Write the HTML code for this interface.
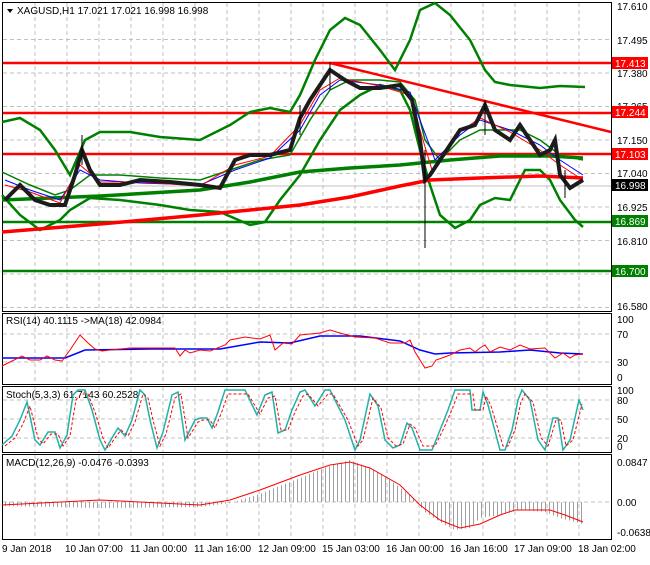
<!DOCTYPE html><html><head><style>
body{margin:0;background:#fff;width:650px;height:560px;overflow:hidden;font-family:"Liberation Sans",sans-serif}
svg text{font-family:"Liberation Sans",sans-serif;font-size:10px;fill:#000}
</style></head><body>
<svg width="650" height="560" viewBox="0 0 650 560" xmlns="http://www.w3.org/2000/svg">
<defs>
<pattern id="hist" width="4" height="10" patternUnits="userSpaceOnUse"><rect x="1" width="1" height="10" fill="#a0a0a0"/></pattern>
</defs>
<rect width="650" height="560" fill="#fff"/>
<g stroke="#c0c0c0" stroke-dasharray="4,3" stroke-width="1">
<path d="M35 3V311M67 3V311M99 3V311M131 3V311M163 3V311M195 3V311M227 3V311M259 3V311M291 3V311M323 3V311M355 3V311M387 3V311M419 3V311M451 3V311M483 3V311M515 3V311M547 3V311M579 3V311"/>
<path d="M35 314V384M67 314V384M99 314V384M131 314V384M163 314V384M195 314V384M227 314V384M259 314V384M291 314V384M323 314V384M355 314V384M387 314V384M419 314V384M451 314V384M483 314V384M515 314V384M547 314V384M579 314V384"/>
<path d="M35 387V452M67 387V452M99 387V452M131 387V452M163 387V452M195 387V452M227 387V452M259 387V452M291 387V452M323 387V452M355 387V452M387 387V452M419 387V452M451 387V452M483 387V452M515 387V452M547 387V452M579 387V452"/>
<path d="M35 455V538M67 455V538M99 455V538M131 455V538M163 455V538M195 455V538M227 455V538M259 455V538M291 455V538M323 455V538M355 455V538M387 455V538M419 455V538M451 455V538M483 455V538M515 455V538M547 455V538M579 455V538"/>
<path d="M3 39.5H611M3 73H611M3 106.5H611M3 140H611M3 173.5H611M3 207H611M3 240.5H611M3 274H611M3 307.5H611"/>
<path d="M3 334H611M3 362H611M3 400H611M3 419H611M3 438H611M3 502H611"/>
</g>
<g stroke="#000" fill="none" stroke-width="1">
<rect x="2.5" y="2.5" width="609" height="309"/>
<rect x="2.5" y="313.5" width="609" height="71"/>
<rect x="2.5" y="386.5" width="609" height="66"/>
<rect x="2.5" y="454.5" width="609" height="85"/>
</g>
<g stroke-width="2.5">
<path d="M3 63H611M3 113H611M3 154H611" stroke="#f00"/>
<path d="M3 222H611M3 271H611" stroke="#008000"/>
</g>
<path d="M3 186H611" stroke="#c0c0c0"/>
<g fill="none" stroke="#008000" stroke-width="2.5">
<path d="M2 122L20 118L40 130L55 150L70 175L85 140L100 132L130 132L160 137L200 140L230 125L250 112L270 108L290 112L300 95L315 60L330 30L345 18L360 25L380 50L395 70L410 40L420 10L435 3L450 15L470 40L485 70L495 82L510 85L540 88L560 86L585 87"/>
<path d="M2 195L20 215L40 230L60 220L70 210L90 198L120 200L160 205L190 210L220 212L250 225L265 222L280 200L300 175L320 140L340 110L360 95L380 85L400 90L410 110L420 150L430 185L440 215L455 228L470 220L480 205L495 198L510 200L525 170L540 170L550 180L560 200L575 220L583 227"/>
<path d="M2 200L100 196L200 190L250 182L300 172L350 168L400 165L450 160L500 156L550 156L583 158" stroke-width="3.5"/>
</g>
<path d="M2 172L30 185L55 195L70 190L90 175L120 175L160 178L200 180L230 170L260 160L290 155L310 120L330 90L350 80L380 80L400 82L415 100L425 140L440 160L460 140L480 130L500 130L520 130L540 140L560 155L583 160" fill="none" stroke="#008000" stroke-width="1.5"/>
<path d="M2 232L100 224L200 215L300 205L350 197L400 186L430 180L480 178L540 176L583 178" fill="none" stroke="#f00" stroke-width="3.5"/>
<path d="M330 63L611 132" stroke="#f00" stroke-width="2.5"/>
<path d="M5 180L30 190L60 200L80 170L100 180L140 183L200 185L235 170L270 158L300 130L320 95L340 80L380 85L410 92L420 120L435 160L460 135L480 120L510 130L540 145L560 160L583 175" fill="none" stroke="#00f" stroke-width="1"/>
<path d="M5 185L30 192L60 203L80 165L100 182L140 182L200 186L235 165L270 156L300 125L320 90L340 78L380 86L410 95L420 130L432 170L460 132L480 118L510 132L540 150L560 165L583 180" fill="none" stroke="#f00" stroke-width="1"/>
<path d="M5 200L20 185L35 200L50 205L65 205L75 175L82 150L90 170L100 185L120 185L140 180L170 182L200 185L220 188L235 160L250 155L270 155L290 150L300 118L310 100L320 85L330 70L345 80L360 88L380 88L400 85L412 100L420 140L425 180L430 175L440 160L450 145L460 130L475 125L485 105L495 130L510 140L520 125L530 140L540 155L550 150L555 140L560 175L570 188L583 180" fill="none" stroke="#1c1c1c" stroke-width="4"/>
<path d="M425 150V248M82 135V165M485 100V135M565 170V198M300 105V135M330 62V90" stroke="#000"/>
<g>
<text x="617" y="10">17.610</text><text x="617" y="44">17.495</text><text x="617" y="77">17.380</text>
<text x="617" y="110">17.265</text><text x="617" y="144">17.150</text><text x="617" y="177">17.040</text>
<text x="617" y="211">16.925</text><text x="617" y="245">16.810</text><text x="617" y="310">16.580</text>
</g>
<rect x="612" y="57" width="36" height="12" fill="#f00"/><text x="615" y="67" style="fill:#fff">17.413</text>
<rect x="612" y="106" width="36" height="12" fill="#f00"/><text x="615" y="116" style="fill:#fff">17.244</text>
<rect x="612" y="148" width="36" height="12" fill="#f00"/><text x="615" y="158" style="fill:#fff">17.103</text>
<rect x="612" y="179" width="36" height="12" fill="#000"/><text x="615" y="189" style="fill:#fff">16.998</text>
<rect x="612" y="215" width="36" height="12" fill="#008000"/><text x="615" y="225" style="fill:#fff">16.869</text>
<rect x="612" y="265" width="36" height="12" fill="#008000"/><text x="615" y="275" style="fill:#fff">16.700</text>
<path d="M7 9L13 9L10 13Z" fill="#000"/>
<text x="17" y="14">XAGUSD,H1  17.021 17.021 16.998 16.998</text>
<!-- RSI -->
<text x="6" y="324">RSI(14) 40.1115  -&gt;MA(18) 42.0984</text>
<text x="617" y="323">100</text><text x="617" y="338">70</text><text x="617" y="366">30</text><text x="617" y="381">0</text>
<path d="M2 358L65 358L85 350L150 349L220 349L260 342L290 343L320 336L360 336L400 341L420 350L435 354L450 353L500 352L530 350L560 353L583 354" fill="none" stroke="#00f" stroke-width="1.5"/>
<path d="M2 366L10 362L22 356L30 360L40 360L47 356L55 360L62 361L70 350L80 335L88 343L95 349L102 351L110 350L130 348L140 348L175 348L180 356L185 350L190 353L200 350L210 351L225 345L230 340L245 337L260 339L270 335L275 350L283 343L292 344L300 335L320 333L330 330L340 333L355 337L375 338L390 343L405 343L410 340L415 352L425 368L432 366L436 360L442 358L450 355L460 350L470 348L475 352L480 348L485 345L490 352L500 347L510 350L520 345L530 349L545 348L555 358L563 353L570 358L575 355L583 354" fill="none" stroke="#f00"/>
<!-- Stoch -->
<text x="6" y="398">Stoch(5,3,3) 61.7143 60.2528</text>
<text x="617" y="394">100</text><text x="617" y="404">80</text><text x="617" y="423">50</text><text x="617" y="442">20</text><text x="617" y="450">0</text>
<g fill="none">
<path id="st" d="M2 445L12 436L20 420L27 402L35 440L40 445L48 432L55 432L60 448L67 435L73 395L78 390L85 390L92 410L100 440L105 450L112 438L118 428L125 436L132 420L140 390L145 395L150 420L157 448L163 432L172 395L178 392L185 440L195 420L200 418L207 418L212 428L218 412L225 390L245 390L257 415L265 395L272 392L278 433L285 430L292 410L300 392L305 390L315 406L325 390L330 390L345 420L355 450L360 440L370 394L378 406L385 440L393 448L400 445L407 423L412 428L420 450L432 450L440 430L448 410L455 390L470 390L472 410L480 410L483 392L488 405L500 450L505 450L512 430L518 400L522 390L530 400L538 440L545 450L550 430L553 418L558 418L563 450L570 440L579 400L583 410" stroke="#20b2aa" stroke-width="1.5"/>
<path d="M5 446L15 438L23 424L30 406L38 438L43 444L51 434L58 434L63 446L70 436L76 400L81 394L88 394L95 412L103 438L108 448L115 438L121 430L128 436L135 422L143 394L148 398L153 420L160 446L166 434L175 398L181 394L188 438L198 422L203 420L210 420L215 428L221 414L228 394L248 394L260 414L268 398L275 396L281 430L288 430L295 412L303 396L308 394L318 406L328 394L333 394L348 420L358 446L363 440L373 398L381 408L388 438L396 446L403 444L410 424L415 428L423 446L435 446L443 430L451 412L458 394L473 394L475 410L483 410L486 396L491 406L503 446L508 446L515 430L521 402L525 394L533 402L541 438L548 446L553 430L556 420L561 420L566 446L573 440L582 404" stroke="#f00" stroke-dasharray="3,2"/>
</g>
<!-- MACD -->
<text x="6" y="466">MACD(12,26,9) -0.0476 -0.0393</text>
<text x="617" y="466">0.0847</text><text x="617" y="506">0.00</text><text x="617" y="536">-0.0638</text>
<path d="M3 502L3 506L100 508L200 507L230 503L260 494L300 478L330 466L350 460L370 468L390 480L410 495L425 512L440 522L455 530L470 528L480 518L500 515L520 510L545 512L560 518L583 524L583 502Z" fill="url(#hist)"/>
<path d="M2 505L100 500L200 505L230 500L260 490L300 475L330 465L350 462L370 468L400 485L420 505L440 520L460 528L480 524L500 515L515 510L550 510L565 515L583 522" fill="none" stroke="#f00"/>
<g>
<text x="2" y="552">9 Jan 2018</text><text x="65" y="552">10 Jan 07:00</text><text x="130" y="552">11 Jan 00:00</text>
<text x="194" y="552">11 Jan 16:00</text><text x="258" y="552">12 Jan 09:00</text><text x="322" y="552">15 Jan 03:00</text>
<text x="386" y="552">16 Jan 00:00</text><text x="450" y="552">16 Jan 16:00</text><text x="514" y="552">17 Jan 09:00</text>
<text x="578" y="552">18 Jan 02:00</text>
</g>
</svg>
</body></html>
